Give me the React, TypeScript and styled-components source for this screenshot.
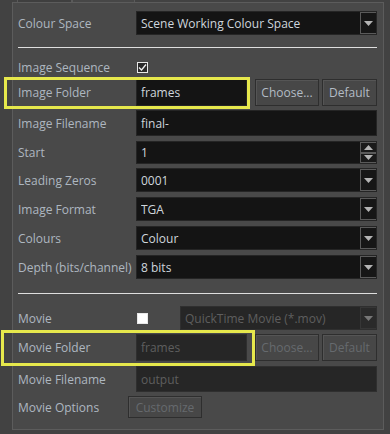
import React from 'react';
import styled, { createGlobalStyle } from 'styled-components';

const GlobalStyle = createGlobalStyle`
  html, body {
    margin: 0;
    padding: 0;
    background: #424242;
    font-family: "Open Sans", "Liberation Sans", sans-serif;
    font-size: 12px;
  }
`;

const Page = styled.div`
  width: 390px;
  height: 434px;
  overflow: hidden;
  padding-left: 12px;
  box-sizing: border-box;
`;

const TabStrip = styled.div`
  display: flex;
  height: 2px;
  padding-left: 5px;
`;

const TabEdge = styled.div<{ $w: number; $active?: boolean }>`
  width: ${({ $w }) => $w}px;
  background: ${({ $active }) => ($active ? '#474747' : '#3f3f3f')};
  border-left: 1px solid #5a5a5a;
  border-right: 1px solid #5a5a5a;
  box-sizing: border-box;
`;

const Panel = styled.div`
  width: 372px;
  height: 428px;
  box-sizing: border-box;
  background: #494949;
  border: 1px solid #5c5c5c;
  padding: 8px 6px 0 5px;
  display: flex;
  flex-direction: column;
`;

const Row = styled.div<{ $h: number; $mt: number }>`
  position: relative;
  display: flex;
  align-items: center;
  height: ${({ $h }) => $h}px;
  margin-top: ${({ $mt }) => $mt}px;
  flex-shrink: 0;
`;

const Label = styled.div`
  width: 118px;
  flex-shrink: 0;
  color: #aeb7c0;
  white-space: nowrap;
`;

const Separator = styled.div<{ $mt: number }>`
  height: 1px;
  background: #dedede;
  margin-top: ${({ $mt }) => $mt}px;
  margin-left: 0;
  margin-right: 0;
  flex-shrink: 0;
`;

const Field = styled.div<{ $disabled?: boolean; $w?: number }>`
  display: flex;
  align-items: center;
  height: 100%;
  ${({ $w }) => ($w ? `width: ${$w}px;` : 'flex: 1;')}
  box-sizing: border-box;
  background: ${({ $disabled }) => ($disabled ? '#262626' : '#141414')};
  color: ${({ $disabled }) => ($disabled ? '#5e5e5e' : '#cfd6dd')};
  border: 1px solid ${({ $disabled }) => ($disabled ? '#2f2f2f' : '#252525')};
  padding-left: 4px;
  white-space: nowrap;
  overflow: hidden;
`;

const FieldText = styled.span`
  flex: 1;
  overflow: hidden;
`;

const ArrowBox = styled.div<{ $disabled?: boolean }>`
  width: 16px;
  height: 100%;
  box-sizing: border-box;
  border: 1px solid ${({ $disabled }) => ($disabled ? '#363636' : '#5a5a5a')};
  border-right: none;
  display: flex;
  align-items: center;
  justify-content: center;
  flex-shrink: 0;
  background: ${({ $disabled }) => ($disabled ? '#2a2a2a' : '#161616')};
`;

const SpinBox = styled.div`
  width: 16px;
  height: 100%;
  display: flex;
  flex-direction: column;
  flex-shrink: 0;
`;

const SpinHalf = styled.div`
  flex: 1;
  box-sizing: border-box;
  border: 1px solid #5a5a5a;
  border-right: none;
  display: flex;
  align-items: center;
  justify-content: center;
  background: #1a1a1a;
`;

const Button = styled.div<{ $w: number; $disabled?: boolean; $ml?: number }>`
  width: ${({ $w }) => $w}px;
  height: 100%;
  margin-left: ${({ $ml }) => $ml ?? 0}px;
  box-sizing: border-box;
  display: flex;
  align-items: center;
  justify-content: center;
  background: #474747;
  border: 1px solid #2e2e2e;
  box-shadow: inset 1px 1px 0 #555555;
  color: ${({ $disabled }) => ($disabled ? '#666a6e' : '#b3bcc5')};
  flex-shrink: 0;
`;

const Check = styled.div<{ $checked?: boolean }>`
  width: 11px;
  height: 11px;
  box-sizing: border-box;
  border: 1px solid #e8e8e8;
  background: ${({ $checked }) => ($checked ? '#2a2a2a' : '#ffffff')};
  display: flex;
  align-items: center;
  justify-content: center;
  margin-left: 1px;
  flex-shrink: 0;
`;

const Highlight = styled.div<{ $l: number; $t: number; $w: number; $h: number }>`
  position: absolute;
  left: ${({ $l }) => $l}px;
  top: ${({ $t }) => $t}px;
  width: ${({ $w }) => $w}px;
  height: ${({ $h }) => $h}px;
  box-sizing: border-box;
  border: 3px solid #e6e84c;
  pointer-events: none;
`;

const Arrow = ({ up, disabled }: { up?: boolean; disabled?: boolean }) => (
  <svg width="9" height="5" viewBox="0 0 9 5">
    <polygon
      points={up ? '0,5 9,5 4.5,0' : '0,0 9,0 4.5,5'}
      fill={disabled ? '#777' : '#b4b4b4'}
    />
  </svg>
);

const Combo = ({ value, disabled }: { value: string; disabled?: boolean }) => (
  <Field $disabled={disabled} style={{ paddingRight: 0 }}>
    <FieldText>{value}</FieldText>
    <ArrowBox $disabled={disabled}>
      <Arrow disabled={disabled} />
    </ArrowBox>
  </Field>
);

const CheckMark = () => (
  <svg width="9" height="9" viewBox="0 0 9 9">
    <polyline points="1,4.5 3.5,7 8,1.5" fill="none" stroke="#f0f0f0" strokeWidth="1.3" />
  </svg>
);

export default function App() {
  return (
    <>
      <GlobalStyle />
      <Page>
        <TabStrip>
          <TabEdge $w={55} />
          <TabEdge $w={63} $active />
        </TabStrip>
        <Panel>
          <Row $h={24} $mt={0}>
            <Label>Colour Space</Label>
            <Combo value="Scene Working Colour Space" />
          </Row>

          <Separator $mt={12} />

          <Row $h={15} $mt={12}>
            <Label>Image Sequence</Label>
            <Check $checked>
              <CheckMark />
            </Check>
          </Row>

          <Row $h={27} $mt={4}>
            <Highlight $l={-14} $t={-2} $w={246} $h={32} />
            <Label>Image Folder</Label>
            <Field $w={112}>frames</Field>
            <Button $w={64} $ml={8}>Choose...</Button>
            <Button $w={55} $ml={3}>Default</Button>
          </Row>

          <Row $h={26} $mt={4}>
            <Label>Image Filename</Label>
            <Field>final-</Field>
          </Row>

          <Row $h={23} $mt={5}>
            <Label>Start</Label>
            <Field style={{ paddingRight: 0 }}>
              <FieldText>1</FieldText>
              <SpinBox>
                <SpinHalf>
                  <Arrow up />
                </SpinHalf>
                <SpinHalf>
                  <Arrow />
                </SpinHalf>
              </SpinBox>
            </Field>
          </Row>

          <Row $h={24} $mt={4}>
            <Label>Leading Zeros</Label>
            <Combo value="0001" />
          </Row>

          <Row $h={24} $mt={5}>
            <Label>Image Format</Label>
            <Combo value="TGA" />
          </Row>

          <Row $h={24} $mt={5}>
            <Label>Colours</Label>
            <Combo value="Colour" />
          </Row>

          <Row $h={24} $mt={5}>
            <Label>Depth (bits/channel)</Label>
            <Combo value="8 bits" />
          </Row>

          <Separator $mt={14} />

          <Row $h={24} $mt={12}>
            <Label>Movie</Label>
            <Check />
            <div style={{ width: 32 }} />
            <Combo value="QuickTime Movie (*.mov)" disabled />
          </Row>

          <Row $h={27} $mt={4}>
            <Highlight $l={-17} $t={-4} $w={254} $h={36} />
            <Label>Movie Folder</Label>
            <Field $w={112} $disabled>frames</Field>
            <Button $w={64} $ml={8} $disabled>Choose...</Button>
            <Button $w={55} $ml={3} $disabled>Default</Button>
          </Row>

          <Row $h={26} $mt={5}>
            <Label>Movie Filename</Label>
            <Field $disabled>output</Field>
          </Row>

          <Row $h={22} $mt={4}>
            <Label style={{ width: 110 }}>Movie Options</Label>
            <Button $w={74} $disabled>Customize</Button>
          </Row>
        </Panel>
      </Page>
    </>
  );
}
